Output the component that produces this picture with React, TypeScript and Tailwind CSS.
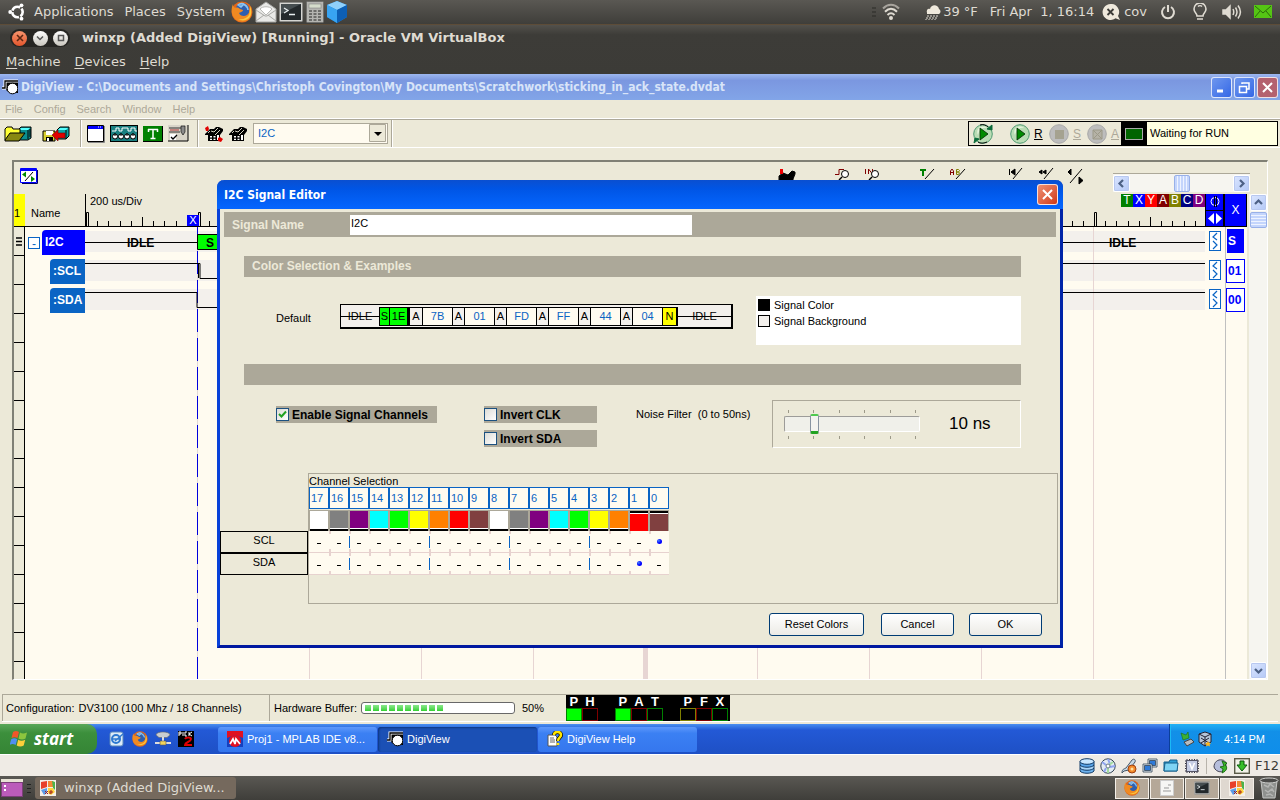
import type { ReactNode } from "react";

const CHANNELS = [
    { id: 17, color: "bg-white" },
    { id: 16, color: "bg-[#808080]" },
    { id: 15, color: "bg-[#800080]" },
    { id: 14, color: "bg-[#00ffff]" },
    { id: 13, color: "bg-[#00ff00]" },
    { id: 12, color: "bg-[#ffff00]" },
    { id: 11, color: "bg-[#ff8000]" },
    { id: 10, color: "bg-[#ff0000]" },
    { id: 9, color: "bg-[#804040]" },
    { id: 8, color: "bg-white" },
    { id: 7, color: "bg-[#808080]" },
    { id: 6, color: "bg-[#800080]" },
    { id: 5, color: "bg-[#00ffff]" },
    { id: 4, color: "bg-[#00ff00]" },
    { id: 3, color: "bg-[#ffff00]" },
    { id: 2, color: "bg-[#ff8000]" },
    { id: 1, color: "bg-[#ff0000]" },
    { id: 0, color: "bg-[#804040]" },
];

const FirefoxIcon = ({ className }: { className: string }) => (
    <svg viewBox="0 0 22 22" className={className}>
        <circle cx="11" cy="11" r="10.5" fill="#e0661a" />
        <circle cx="11.5" cy="9" r="7" fill="#2f5fae" />
        <path d="M12 3c3 1 5 3 5 6M7 4c2-2 5-2 6-1l-3 3z" stroke="#8fc4ee" strokeWidth="1.4" fill="#6aa5de" />
        <path d="M2 3c0 2 1 3 2 4 2-1 4 0 5 1l3 1c0 2-3 2-4 3 1 3 5 4 8 2 2-1 3-4 2-7 3 3 3 8 0 11-4 4-11 3-14 0C0 14 0 7 2 3z" fill="#f08a22" />
        <path d="M19 5c2 4 2 9-1 12-3 3-8 3-11 1 5 1 9-1 11-4 1-3 1-6 1-9z" fill="#fbc63c" />
    </svg>
);

const TerminalIcon = ({ className }: { className: string }) => (
    <svg viewBox="0 0 24 20" className={className}>
        <rect x="0.5" y="0.5" width="23" height="19" rx="1" fill="#d5d5d2" stroke="#8b8b88" />
        <rect x="2" y="2" width="20" height="16" fill="#23292c" />
        <path d="M2 2h20L2 12z" fill="#454d50" />
        <path d="M5 6l4 2.5L5 11M10 12.5h6" stroke="#e8eef0" fill="none" strokeWidth="1.3" />
    </svg>
);

const XpLogo = ({ className }: { className: string }) => (
    <svg viewBox="0 0 20 18" className={className}>
        <path d="M3 2c2-1.5 4-1.5 6 0L7.5 8c-2-1-4-1-6 0z" fill="#f0562a" />
        <path d="M10 2.5c2 1.2 4 1.2 7 0L15.5 8.5c-2 1.2-5 1.2-7 0z" fill="#8cc63e" />
        <path d="M1.2 9.2c2-1.2 4-1.2 6 0L5.6 15c-2-1.2-4-1.2-6 0z" fill="#4f8ff0" />
        <path d="M8.2 9.8c2 1.2 4.5 1.2 7 0L13.7 15.5c-2 1.2-5 1.2-7 0z" fill="#fbcf3b" />
    </svg>
);

const GuestIcon = ({ className }: { className: string }) => (
    <svg viewBox="0 0 16 16" className={className}>
        <rect width="16" height="16" fill="#f4efe8" />
        <path d="M1 2l6-1v6l-6 2z" fill="#e8402a" />
        <path d="M8 1l5 0c1 2 1 4 0 6H8z" fill="#f58a35" />
        <path d="M1 10l6-2v5l-3 2z" fill="#5b9be8" />
        <path d="M8 8h5l2 4-4 3-3-2z" fill="#ffd23c" />
        <path d="M12 1l3 1v8l-2-2z" fill="#4bb34a" />
        <path d="M5 11l3 3M8 11l-3 3M10 11v3M10 11h2v2h-2" stroke="#a02020" fill="none" />
    </svg>
);

const ScopeIcon = ({ className }: { className: string }) => (
    <svg viewBox="0 0 16 16" className={className}>
        <path d="M4 2h12v12H8l-4-3z" fill="#000" />
        <path d="M0 9h3V2h13" stroke="#fff" fill="none" strokeWidth="3" />
        <path d="M0 9h3V2h13" stroke="#000" fill="none" strokeWidth="1.3" />
        <circle cx="10.500" cy="9.500" r="5.300" fill="#fff" stroke="#000" />
    </svg>
);

const FolderIcon = () => (
    <svg viewBox="0 0 28 16" className="h-4 w-7">
        <path d="M14 4l3-3h10v11l-3 2H14z" fill="#0a8f8f" stroke="#000" />
        <path d="M17 2h9l-2 2h-9z" fill="#5ff" />
        <path d="M24 4v9M26 3v8" stroke="#000" />
        <path d="M1 14V3l2-2h5l1 2h7v4" fill="#ff3" stroke="#000" />
        <path d="M1 14l5-7h15l-6 8H1z" fill="#888811" stroke="#000" />
    </svg>
);

const SaveIcon = () => (
    <svg viewBox="0 0 28 16" className="h-4 w-7">
        <path d="M15 4l3-3h9v9l-3 3H15z" fill="#0aa5a5" stroke="#000" />
        <path d="M18 2h8l-2 2h-8z" fill="#5ff" />
        <path d="M24 4v9" stroke="#000" />
        <path d="M1 5h12v10H1z" fill="#d8cf30" stroke="#000" />
        <path d="M4 5h7v4H4z" fill="#fff" />
        <path d="M4 11h7v4H4z" fill="#000" />
        <path d="M5 12h2v3H5z" fill="#fff" />
        <path d="M10 9l6-5v3h7v5h-7v3z" fill="#e00000" stroke="#700" strokeWidth="0.6" />
    </svg>
);

const ChipIcon = () => (
    <svg viewBox="0 0 28 17" className="h-[17px] w-7">
        <rect width="28" height="17" fill="#000" />
        <rect x="1" y="1" width="26" height="15" fill="#1a7f80" />
        <path d="M2 6h4V3h3v3h3V3h6v3h3V3h4v3h2" stroke="#fff" fill="none" />
        {[5, 11, 17, 23].map((x) => (
            <g key={x}>
                <circle cx={x} cy="11.5" r="2.5" fill="#fff" stroke="#000" />
                <path d={`M${x} 8v3`} stroke="#000" />
            </g>
        ))}
    </svg>
);

const HouseIcon = ({ arrows }: { arrows?: boolean }) => (
    <svg viewBox="0 0 18 16" className="h-4 w-[18px]">
        <path d="M0 8l5-5h4l2-2h3l4 2v2l-3 4v6H3V9H0z" fill="#000" />
        <path d="M6 5l3 1 4-4M3 7l2-2M10 9l5-5" stroke="#ece9d8" fill="none" strokeWidth="0.9" />
        <path d="M5 10h2v1.500H5zM8.500 10h2v1.500h-2zM5 12.800h2V14H5zM8.500 12.800h2V14h-2zM12 9h2v5h-2z" fill="#fff" />
        {arrows && <path d="M0 2l3-2 1 3-1 2H1zM13 12l2-1 3 2-2 3-3-1z" fill="#e00000" />}
    </svg>
);

const PropsIcon = () => (
    <svg viewBox="0 0 21 17" className="h-[17px] w-[21px]">
        <path d="M0 0h20v16H0z" fill="#d8d4c8" />
        <path d="M20 0v16H0" stroke="#000" fill="none" />
        <path d="M1 3h12M1 7h11" stroke="#333" />
        <path d="M2 5h9" stroke="#b03030" />
        <path d="M13 1h4v6l-2 3-2-3z" fill="#8a8a8a" stroke="#000" strokeWidth="0.6" />
        <path d="M2 9h6v6H2z" fill="#fff" />
        <path d="M3 12l2 2 4-4" stroke="#000" fill="none" strokeWidth="1.3" />
    </svg>
);

const RunIcon = ({ kind }: { kind: "cycle" | "play" | "stop" | "abort" }) => {
    const on = kind === "cycle" || kind === "play";
    return (
        <svg viewBox="0 0 20 20" className="size-5">
            <circle cx="10" cy="10" r="9.3" fill={on ? "#b9dcb4" : "#bdbdbd"} stroke={on ? "#4f9a72" : "#a8a8a8"} />
            {on && <path d="M5 5c3-3 7-3 9-1-4-1-8 2-9 7-1-2-1-4 0-6z" fill="#e4f5dd" />}
            {on && <path d="M7 4l8 6-8 6z" fill="#008a00" stroke="#002800" strokeWidth="0.8" />}
            {kind === "cycle" && <path d="M14 5l5-4v5zM1 19l1-5 4 1z" fill="#0b6b3a" stroke="#0b6b3a" />}
            {kind === "cycle" && <path d="M7 1c3-1 6 0 8 2M5 18c3 2 6 1 9 0" stroke="#000" fill="none" />}
            {kind === "stop" && <path d="M6 6h9v9H6z" fill="#a5a290" />}
            {kind === "abort" && <path d="M6 6h9v9H6zM6 6l9 9M15 6l-9 9" fill="#b5b2a6" stroke="#9c9988" />}
        </svg>
    );
};

const GnomePanel = () => (
    <div className="flex h-[25px] items-center border-b border-[#5d4c38] bg-linear-to-b from-[#5a5853] to-[#3f3e3a] text-[13px] text-[#dfdbd2]">
        <svg viewBox="0 0 18 18" className="ml-2 size-[18px]">
            <circle cx="9.5" cy="9" r="5.2" fill="none" stroke="#fff" strokeWidth="2.6" strokeDasharray="9.4 1.5" strokeDashoffset="4.5" />
            <circle cx="2.2" cy="9" r="1.9" fill="#fff" />
            <circle cx="13.5" cy="2.3" r="1.9" fill="#fff" />
            <circle cx="13.5" cy="15.7" r="1.9" fill="#fff" />
        </svg>
        <div className="ml-2 flex gap-[11px]">
            <span>Applications</span>
            <span>Places</span>
            <span>System</span>
        </div>
        <div className="ml-[6px] flex items-center gap-[2px]">
            <FirefoxIcon className="size-[22px]" />
            <svg viewBox="0 0 22 22" className="size-[22px]">
                <path d="M1 8l10-7 10 7v13H1z" fill="#e9e9e7" stroke="#a5a5a2" />
                <path d="M5 8c2-3 10-3 12 0l-6 6z" fill="#fff" stroke="#b9b9b6" />
                <path d="M1 9l9 6h2l9-6M1 20l8-6M21 20l-8-6" fill="none" stroke="#a8a8a5" />
            </svg>
            <TerminalIcon className="h-5 w-6" />
            <svg viewBox="0 0 18 22" className="ml-px h-[22px] w-[18px]">
                <rect x="0.5" y="0.5" width="17" height="21" rx="1" fill="#b5b5b1" stroke="#6f6f6c" />
                <rect x="3" y="3" width="12" height="4" fill="#d5dccb" stroke="#777" strokeWidth="0.5" />
                {[9, 12, 15, 18].map((y) => (
                    <path key={y} d={`M3 ${y + 1}h3M7.5 ${y + 1}h3M12 ${y + 1}h3`} stroke="#6d6d6a" strokeWidth="2" />
                ))}
            </svg>
            <svg viewBox="0 0 22 22" className="size-[22px]">
                <path d="M11 0l10 4v12l-10 6L1 16V4z" fill="#1c83d8" />
                <path d="M11 0l10 4-10 5L1 4z" fill="#8fd0fb" />
                <path d="M1 4l10 5v13L1 16z" fill="#38a4f2" />
                <path d="M21 4L11 9v13l10-6z" fill="#0d5fb5" />
            </svg>
        </div>
        <div className="ml-auto flex items-center">
            <svg viewBox="0 0 30 18" className="mr-[23px] h-[18px] w-[30px]" fill="none" stroke="#dfdbd2" strokeWidth="2">
                <path d="M0 5h4M0 9h4M0 13h4" stroke="#2b2a27" strokeWidth="1" />
                <path d="M11 5.5c5-5 11-5 16 0" opacity="0.6" />
                <path d="M13 8.8c4-4 8-4 12 0M15.5 12c2.5-2.5 4.500-2.5 7 0" />
                <circle cx="19" cy="15" r="1" fill="#dfdbd2" />
            </svg>
            <svg viewBox="0 0 16 16" className="mr-[2px] size-4">
                <path d="M2 9c-1-3 1-5 3-4 1-5 8-5 9 0 2 1 2 4 0 5H2z" fill="#efe9dc" />
                <path d="M2 12h12M1 14h11M0 16h11" stroke="#dfdbd2" strokeDasharray="2 1" />
            </svg>
            <span>39 °F</span>
            <span className="ml-3 whitespace-pre">Fri Apr  1, 16:14</span>
            <svg viewBox="0 0 18 16" className="ml-2 h-4 w-[18px]">
                <path d="M8.5 0a8 8 0 1 0 5 14.3L18 16l-2-4A8 8 0 0 0 8.5 0z" fill="#efe9dc" />
                <path d="M5.5 5l6 6M11.5 5l-6 6" stroke="#3c3b37" strokeWidth="1.8" />
            </svg>
            <span className="ml-1">cov</span>
            <svg viewBox="0 0 16 16" className="ml-[13px] size-4" fill="none" stroke="#dfdbd2" strokeWidth="2">
                <path d="M5 3a6 6 0 1 0 6 0M8 1v7" />
            </svg>
            <svg viewBox="0 0 16 18" className="ml-4 h-[18px] w-4" fill="none" stroke="#dfdbd2" strokeWidth="1.6">
                <path d="M5 13c0-3-3-3-3-7a6 6 0 0 1 12 0c0 4-3 4-3 7zM5 16h6M6 3.5c1-1 3-1 4 0" />
            </svg>
            <svg viewBox="0 0 20 16" className="ml-[14px] h-4 w-5" fill="none" stroke="#dfdbd2" strokeWidth="1.5">
                <path d="M1 6h3l4-4v12l-4-4H1z" fill="#dfdbd2" />
                <path d="M11 5c1 2 1 4 0 6M13.5 3.5c2 3 2 6 0 9M16 1.5c3 4 3 9 0 13" />
            </svg>
            <svg viewBox="0 0 18 14" className="mr-2 ml-3 h-[14px] w-[18px]">
                <rect width="18" height="13" fill="#55c514" />
                <path d="M1 1l8 7 8-7M1 12l5-6M17 12l-5-6" fill="none" stroke="#2b6b0a" />
            </svg>
        </div>
    </div>
);

const HostTitle = () => (
    <div className="bg-linear-to-b from-[#53514c] via-[#3d3c38] via-20% to-[#3c3b37] text-[13px] text-[#dfdbd2]">
        <div className="flex h-[26px] items-center">
            <div className="ml-[10px] flex h-[18px] w-[60px] items-center justify-between rounded-full bg-[#262522] px-[2px]">
                <button aria-label="Close" className="grid size-[15px] place-items-center rounded-full bg-linear-to-b from-[#f7936c] to-[#e2552b]">
                    <svg viewBox="0 0 8 8" className="size-2" stroke="#5b2612" strokeWidth="1.6"><path d="M1 1l6 6M7 1L1 7" /></svg>
                </button>
                <button aria-label="Minimize" className="grid size-[15px] place-items-center rounded-full bg-linear-to-b from-white to-[#c9c6be]">
                    <svg viewBox="0 0 8 8" className="size-2" stroke="#555" strokeWidth="1.5" fill="none"><path d="M1 2.5l3 3 3-3" /></svg>
                </button>
                <button aria-label="Maximize" className="grid size-[15px] place-items-center rounded-full bg-linear-to-b from-white to-[#c9c6be]">
                    <svg viewBox="0 0 8 8" className="size-2" stroke="#555" strokeWidth="1.5" fill="none"><path d="M1.5 1.5h5v5h-5z" /></svg>
                </button>
            </div>
            <h1 className="ml-3 font-bold">winxp (Added DigiView) [Running] - Oracle VM VirtualBox</h1>
        </div>
        <div className="flex h-[23px] items-center gap-[14px] px-[6px] pb-[2px]">
            <span><u className="underline-offset-2">M</u>achine</span>
            <span><u className="underline-offset-2">D</u>evices</span>
            <span><u className="underline-offset-2">H</u>elp</span>
        </div>
    </div>
);

const XpButton = ({ label, red, dim, children }: { label: string; red?: boolean; dim?: boolean; children: ReactNode }) => (
    <button
        aria-label={label}
        className={
            "grid size-[21px] place-items-center rounded-[3px] border border-white/80 " +
            (red ? (dim ? "bg-[#b4616f]" : "bg-linear-to-br from-[#ee8f72] to-[#cf3512]") : "bg-linear-to-br from-[#6f97ee] to-[#3567e6]")
        }
    >
        <svg viewBox="0 0 13 13" className="size-[13px]" fill="none" stroke="#fff" strokeWidth="2">
            {children}
        </svg>
    </button>
);

const AppTitle = () => (
    <div className="flex h-[26px] items-center gap-[2px] bg-linear-to-b from-[#9db7f0] via-[#7b97e0] via-25% to-[#82a5e8] pr-[2px] pl-[2px] text-[#d8e4f8]">
        <ScopeIcon className="size-4" />
        <h2 className="ml-px flex-1 truncate text-[12px] font-bold [font-family:'DejaVu_Sans_Condensed','DejaVu_Sans',sans-serif]">
            DigiView - C:\Documents and Settings\Christoph Covington\My Documents\Scratchwork\sticking_in_ack_state.dvdat
        </h2>
        <XpButton label="Minimize"><path d="M2 10h6" strokeWidth="3" /></XpButton>
        <XpButton label="Restore"><path d="M1.5 5.5h7v6h-7zM4 3V2h7v6H9" strokeWidth="1.5" /></XpButton>
        <XpButton label="Close" red dim><path d="M2 2l9 9M11 2l-9 9" /></XpButton>
    </div>
);

const ToolGroup = ({ className, children }: { className: string; children: ReactNode }) => (
    <div className={"flex items-center border-r border-[#aca899] shadow-[1px_0_0_#fff] " + className}>{children}</div>
);

const AppToolbar = () => (
    <div className="flex h-[29px] items-stretch border-t border-b border-t-[#aca899] border-b-white shadow-[0_-1px_0_#fff]">
        <ToolGroup className="w-[81px] gap-[10px] pl-[4px]">
            <FolderIcon />
            <SaveIcon />
        </ToolGroup>
        <ToolGroup className="w-[117px] gap-[5px] pl-[6px]">
            <svg viewBox="0 0 18 18" className="size-[18px]">
                <path d="M.5.5h16v16H.5z" fill="#fff" stroke="#000" />
                <path d="M1 1h15v3H1z" fill="#00f" />
                <path d="M11 2h1M13 2h1" stroke="#fff" />
                <path d="M17.5 1v16.5H1" stroke="#888" fill="none" />
            </svg>
            <ChipIcon />
            <svg viewBox="0 0 20 16" className="h-4 w-5">
                <path d="M0 0h20v16H0z" fill="#000" />
                <path d="M0 0h19v15H0z" fill="#008000" />
                <path d="M5 3.5h10M10 3v9M7.5 12.500h5M5.5 3v3M14.500 3v3" stroke="#fff" strokeWidth="1.5" />
            </svg>
            <PropsIcon />
        </ToolGroup>
        <ToolGroup className="w-[194px] gap-[6px] pl-[7px]">
            <HouseIcon arrows />
            <HouseIcon />
            <div className="relative">
                <select aria-label="Signal" className="block h-[21px] w-[135px] appearance-none border border-[#aca899] bg-[#fffbf0] pl-1 text-[11px] leading-[15px] text-[#0a64c4]">
                    <option>I2C</option>
                </select>
                <svg viewBox="0 0 18 19" className="pointer-events-none absolute top-px right-px h-[19px] w-[18px]">
                    <path d="M.5.5h16v17H.5z" fill="#ece9d8" stroke="#aca899" />
                    <path d="M5 8h8l-4 4z" fill="#000" />
                </svg>
            </div>
        </ToolGroup>
        <div className="my-px mr-[2px] ml-auto flex w-[310px] items-center border border-black pl-1">
            <RunIcon kind="cycle" />
            <span className="w-[17px]" />
            <RunIcon kind="play" />
            <u className="w-[19px] pl-1 text-xs">R</u>
            <RunIcon kind="stop" />
            <u className="w-[18px] pl-1 text-xs text-[#aca899]">S</u>
            <RunIcon kind="abort" />
            <u className="w-[14px] pl-1 text-xs text-[#aca899]">A</u>
            <div className="flex h-full flex-1 bg-[#ffffe1]">
                <div className="grid w-[26px] place-items-center bg-black">
                    <div className="h-3 w-[18px] border border-[#aaa] bg-[#006400]" />
                </div>
                <span className="self-center pl-[3px] text-[11px]">Waiting for RUN</span>
            </div>
        </div>
    </div>
);

const ScrollButton = ({ d }: { d: string }) => (
    <button aria-label="Scroll" className="grid size-[17px] shrink-0 place-items-center rounded-[2px] border border-white bg-linear-to-br from-[#dbe6ff] to-[#b4c8f6] shadow-[0_0_0_1px_#b8c8f0_inset]">
        <svg viewBox="0 0 9 9" className="size-[9px]" fill="none" stroke="#4d6185" strokeWidth="2.2"><path d={d} /></svg>
    </button>
);

const GraphTools = () => (
    <div className="flex h-8 items-start pt-[6px] pl-[6px]">
        <svg viewBox="0 0 18 16" className="h-4 w-[18px]">
            <path d="M.5.5h16v14H.5z" fill="#fff" stroke="#00f" />
            <path d="M1 1h15v2H1z" fill="#00f" />
            <path d="M17.5 2v13.5H2" stroke="#006" fill="none" />
            <path d="M5 13l8-9" stroke="#000" />
            <path d="M2 6.500l4-3v6zM15 11l-4-3v6z" fill="#080" />
        </svg>
        <div className="ml-auto flex items-start">
            <svg viewBox="0 0 200 18" className="h-[18px] w-[200px]" fill="none" stroke="#000">
                <path d="M1 8l4-3 5 2 4-4 3 1v2l-2 5v7H1z" fill="#000" />
                <path d="M2 1h3v5H2z" fill="#e00" stroke="none" />
                <path d="M57 6.5h4v-5h5" stroke="#800000" />
                <circle cx="67" cy="6" r="3.5" fill="#fff" />
                <path d="M64 9l-3 3" strokeWidth="1.5" />
                <path d="M87.500 1v5M90.500 6V1l4 5V1" stroke="#800000" />
                <circle cx="97" cy="6" r="3.5" fill="#fff" />
                <path d="M94 9l-3 3" strokeWidth="1.5" />
                <path d="M142 2h6M145 2v6" stroke="#008000" strokeWidth="2" />
                <path d="M147 11l9-10M178 11l9-10" />
                <path d="M172.500 7V3l1.500-2 1.500 2v4M172 4.500h4" stroke="#800000" />
                <path d="M178.500 1.500h2l1 1-1 1.500h-2 2l1 1-1 1.500h-2z" stroke="#808000" />
            </svg>
            <svg viewBox="0 0 84 18" className="mr-[25px] ml-[26px] h-[18px] w-[84px]" fill="#000" stroke="#000">
                <path d="M5.500 1v6M7 4l4-3v6zM9 11l9-11M35 4l3-2v4zM39 4l3-2v4zM40 11l9-11M64 4l3-3v6zM66 15l12-14M75 9v7l4-3.5z" />
            </svg>
            <div className="mt-[5px] mr-[17px] flex h-[19px] w-[137px] items-center border-t border-[#aca899] bg-[#f6f5f0]">
                <ScrollButton d="M6 1L2.5 4.5 6 8" />
                <div className="flex flex-1 justify-center">
                    <div className="h-[17px] w-4 rounded-[2px] border border-[#98b0e8] bg-[repeating-linear-gradient(90deg,#c4d5fc_0_2px,#eef3ff_2px_3px)]" />
                </div>
                <ScrollButton d="M3 1l3.5 3.5L3 8" />
            </div>
        </div>
    </div>
);

const MARKERS = [
    { name: "T", color: "bg-[#008000]" },
    { name: "X", color: "bg-[#0000ff]" },
    { name: "Y", color: "bg-[#ff0000]" },
    { name: "A", color: "bg-[#800000]" },
    { name: "B", color: "bg-[#808000]" },
    { name: "C", color: "bg-[#000080]" },
    { name: "D", color: "bg-[#800080]" },
];

const Ruler = () => (
    <div className="relative flex-1 border-l border-black">
        <svg className="absolute inset-0 size-full" stroke="#000">
            {Array.from({ length: 100 }, (_, i) => {
                const x = Math.round(i * 11.2) + 0.5;
                if (i % 10 === 0) return <path key={i} d={`M${x} 32V18.5h2V32`} fill="#ece9d8" />;
                return <path key={i} d={`M${x} 32V${i % 5 === 0 ? 23 : 27}`} />;
            })}
        </svg>
        <span className="absolute top-0 left-1 leading-[14px]">200 us/Div</span>
        <span className="absolute bottom-0 left-[101px] h-[11px] w-3 bg-[#0000ff] text-center leading-[11px] text-white">X</span>
        <div className="absolute top-0 right-0 flex h-[13px] text-white">
            {MARKERS.map((m) => (
                <span key={m.name} className={"w-3 text-center text-xs leading-[13px] " + m.color}>{m.name}</span>
            ))}
        </div>
    </div>
);

const GRID = [224, 336, 448, 672, 784, 896, 1008];

const Waves = () => (
    <svg className="absolute inset-0 size-full" fill="none">
        <path d="M0 4h1120v21H0zM0 33h1120v21H0zM0 62h1120v21H0z" fill="#f3f0ec" />
        {GRID.map((x) => (
            <path key={x} d={`M${x + 0.5} 0v460`} stroke="#e7d5d3" />
        ))}
        <path d="M560.5 0v460" stroke="#e7d5d3" strokeWidth="5" />
        <path d="M112.5 0v460" stroke="#e0d8d8" />
        <path d="M112.5-5v460" stroke="#0000dd" strokeDasharray="23 6" />
        <path d="M0 15.5h1120M0 36.5h115v15h835v-15h170M0 65.5h112v15h838v-15h170M113.5 36v15" stroke="#000" />
        <path d="M112.5 7.5h30v15h-30z" fill="#00ff00" stroke="#000" />
        <g fill="#000" fontSize="12" fontWeight="bold">
            <text x="42" y="20">IDLE</text>
            <text x="121" y="20">S</text>
            <text x="1024" y="20">IDLE</text>
        </g>
    </svg>
);

const Graph = () => (
    <div className="mx-3 mt-3 flex flex-1 flex-col border-t-2 border-r border-b border-l-2 border-[#808075] border-r-white border-b-white text-[11px]">
        <GraphTools />
        <div className="flex flex-1">
            <div className="flex flex-1 flex-col pr-[2px]">
                <div className="flex h-[33px] border-b border-black">
                    <span className="w-[11px] bg-[#ffff00] pt-[11px]">1</span>
                    <span className="w-[60px] pt-[11px] pl-[6px]">Name</span>
                    <Ruler />
                    <div className="grid w-[20px] gap-px border-l border-black bg-black pr-[2px]">
                        <button aria-label="Center" className="grid place-items-center bg-[#0000ff]">
                            <svg viewBox="0 0 14 13" className="h-[13px] w-[14px]" fill="none" stroke="#fff"><circle cx="7" cy="6.5" r="4" /><path d="M6.500 1v11M8.500 1v11" stroke="#000" /></svg>
                        </button>
                        <button aria-label="Spread" className="grid place-items-center bg-[#0000ff]">
                            <svg viewBox="0 0 14 13" className="h-[13px] w-[14px]" fill="#fff"><path d="M6 1v11L0 6.5zM8 1v11l6-5.5z" /></svg>
                        </button>
                    </div>
                    <div className="grid w-[22px] place-items-center border-r border-black bg-[#0000ff] text-xs text-white">X</div>
                </div>
                <div className="flex flex-1 bg-[#fffbf0]">
                    <div className="w-[11px] border-r border-black bg-[repeating-linear-gradient(#ece9d8_0_28px,#000_28px_29px)]">
                        <svg viewBox="0 0 10 20" className="h-5 w-[10px]" stroke="#000" strokeWidth="1.5"><path d="M2 11h6M2 14.5h6M2 18h6" /></svg>
                    </div>
                    <div className="flex w-[60px] flex-col items-end gap-1 pt-[3px] text-xs font-bold text-white">
                        <div className="flex items-center gap-[2px]">
                            <button aria-label="Collapse" className="grid size-[12px] place-items-center border border-[#0a64c4] bg-white font-normal leading-none text-[#0a64c4]">-</button>
                            <span className="w-[43px] rounded-tl-[4px] bg-[#0000ff] pl-[3px] leading-[25px]">I2C</span>
                        </div>
                        <span className="w-[35px] rounded-tl-[4px] bg-[#0a64c4] pl-[3px] leading-[25px]">:SCL</span>
                        <span className="w-[35px] rounded-tl-[4px] bg-[#0a64c4] pl-[3px] leading-[25px]">:SDA</span>
                    </div>
                    <div className="relative flex-1">
                        <Waves />
                    </div>
                    <div className="flex w-[21px] flex-col items-center gap-[9px] border-r border-[#c0c0c0] pt-1">
                        {["I2C", "SCL", "SDA"].map((n) => (
                            <button key={n} aria-label={"Search " + n} className="h-5 w-3 border border-[#0a64c4] bg-white">
                                <svg viewBox="0 0 10 18" className="h-[18px] w-[10px]" fill="none" stroke="#0a64c4" strokeWidth="1.2"><path d="M7 1L3 5l4 3M3 9l4 4-4 4" /></svg>
                            </button>
                        ))}
                    </div>
                    <div className="flex w-[21px] flex-col gap-[5px] pt-[2px] text-xs font-bold text-[#0000ff]">
                        <span className="mr-[3px] mb-px ml-px bg-[#0000ff] pl-px leading-[24px] text-white">S</span>
                        <span className="mr-[2px] border border-[#0000ff] bg-white pl-px leading-[22px]">01</span>
                        <span className="mr-[2px] border border-[#0000ff] bg-white pl-px leading-[22px]">00</span>
                    </div>
                </div>
            </div>
            <div className="flex w-[18px] flex-col items-center justify-between bg-[#f6f5f0]">
                <div>
                    <ScrollButton d="M1 6l3.5-3.5L8 6" />
                    <div className="mt-px h-4 w-[17px] rounded-[2px] border border-[#98b0e8] bg-[repeating-linear-gradient(#c4d5fc_0_2px,#eef3ff_2px_3px)]" />
                </div>
                <ScrollButton d="M1 3l3.5 3.5L8 3" />
            </div>
        </div>
    </div>
);

const PREVIEW = ["7B", "01", "FD", "FF", "44", "04"];

const Preview = () => (
    <div className="flex h-[25px] w-[393px] items-center border border-r-2 border-b-2 border-black bg-[#f3f0ec] text-[11px]">
        <div className="relative flex-1 text-center before:absolute before:inset-x-0 before:top-1/2 before:border-t before:border-black">IDLE</div>
        <div className="flex h-[19px] border-y border-black leading-[17px]">
            <span className="w-[10px] border-l border-black bg-[#00ff00] text-center">S</span>
            <span className="w-[21px] border-r-3 border-l border-black bg-[#00ff00] text-center">1E</span>
            {PREVIEW.map((v, i) => (
                <span key={v} className="flex">
                    <span className={(i > 0 ? "border-l " : "") + "w-3 border-black text-center"}>A</span>
                    <span className="w-[30px] border-l border-black bg-[#fffbf0] text-center text-[#0a64c4]">{v}</span>
                </span>
            ))}
            <span className="w-[16px] border-r-2 border-l border-black bg-[#ffff00] text-center">N</span>
        </div>
        <div className="relative w-[53px] text-center before:absolute before:inset-x-0 before:top-1/2 before:border-t before:border-black">IDLE</div>
    </div>
);

const Check = ({ label, checked, className }: { label: string; checked?: boolean; className: string }) => (
    <label className={"flex h-[17px] items-center gap-[3px] bg-[#aca899] text-xs font-bold " + className}>
        <span className="relative grid size-[13px] place-items-center">
            <input type="checkbox" defaultChecked={checked} className="size-[13px] appearance-none border border-[#1c5180] bg-linear-to-br from-[#dcdcd7] to-white" />
            {checked && (
                <svg viewBox="0 0 9 9" className="pointer-events-none absolute size-[9px]" fill="none" stroke="#21a121" strokeWidth="2"><path d="M1 4l2.5 2.5L8 1.5" /></svg>
            )}
        </span>
        {label}
    </label>
);

const Ticks = () => (
    <div className="flex w-32 justify-between">
        {[0, 10, 20, 30, 40, 50].map((t) => (
            <span key={t} className="h-[3px] w-px bg-[#9c9988]" />
        ))}
    </div>
);

const NoiseFilter = () => (
    <div className="flex h-12 w-[249px] items-center border border-[#aca899] border-r-white border-b-white pl-[11px]">
        <div className="flex w-[136px] flex-col items-center gap-px">
            <Ticks />
            <input
                id="noise"
                type="range"
                min={0}
                max={50}
                defaultValue={10}
                className="h-[21px] w-full appearance-none bg-transparent [&::-webkit-slider-runnable-track]:h-4 [&::-webkit-slider-runnable-track]:rounded-[2px] [&::-webkit-slider-runnable-track]:border [&::-webkit-slider-runnable-track]:border-[#9d9c99] [&::-webkit-slider-runnable-track]:border-r-white [&::-webkit-slider-runnable-track]:border-b-white [&::-webkit-slider-runnable-track]:bg-[#f0f0ea] [&::-webkit-slider-thumb]:mt-[-3px] [&::-webkit-slider-thumb]:h-5 [&::-webkit-slider-thumb]:w-[9px] [&::-webkit-slider-thumb]:appearance-none [&::-webkit-slider-thumb]:rounded-[2px] [&::-webkit-slider-thumb]:border [&::-webkit-slider-thumb]:border-t-2 [&::-webkit-slider-thumb]:border-b-3 [&::-webkit-slider-thumb]:border-[#8793a0] [&::-webkit-slider-thumb]:border-t-[#4fc94f] [&::-webkit-slider-thumb]:border-b-[#22a322] [&::-webkit-slider-thumb]:bg-[#f3f3ef]"
            />
            <Ticks />
        </div>
        <span className="pl-[29px] text-[17px]">10 ns</span>
    </div>
);

const ChannelRow = ({ name, selected }: { name: string; selected: number }) => (
    <tr aria-label={name}>
        {CHANNELS.map((c, i) => (
            <td key={c.id} className="p-0">
                <div className="relative h-[22px] border-b border-[#e7d2cf] bg-[#fffbf0] text-center leading-[18px]">
                    {i > 0 && <span className="absolute top-0 left-0 h-[3px] w-[2px] bg-[#e7d2cf]" />}
                    {i > 0 && <span className="absolute bottom-0 left-0 h-[3px] w-[2px] bg-[#e7d2cf]" />}
                    {c.id % 4 === 3 && <span className="absolute top-[5px] left-0 h-3 w-px bg-[#0a64c4]" />}
                    {c.id === selected ? (
                        <span className="inline-block size-[5px] rounded-full bg-[radial-gradient(circle_at_35%_35%,#48f,#00f_50%)] align-middle" />
                    ) : (
                        <span className="mt-[5px] inline-block h-px w-1 bg-black align-middle" />
                    )}
                </div>
            </td>
        ))}
    </tr>
);

const ChannelPanel = () => (
    <div className="mt-[25px] flex">
        <div className="w-[88px] pt-[58px] text-center leading-[16px]">
            <div className="h-[22px] border border-black">SCL</div>
            <div className="h-[22px] border border-black">SDA</div>
        </div>
        <div className="mr-[2px] h-[131px] flex-1 border border-[#aca899]">
            <table className="table-fixed border-collapse">
                <caption className="h-[13px] text-left leading-[14px]">Channel Selection</caption>
                <thead>
                    <tr>
                        {CHANNELS.map((c) => (
                            <th key={c.id} className="w-5 p-0 font-normal">
                                <div className="h-[22px] w-5 border border-[#0a64c4] bg-[#fffbf0] pl-px text-left leading-[20px] text-[#0a64c4]">{c.id}</div>
                            </th>
                        ))}
                    </tr>
                </thead>
                <tbody>
                    <tr>
                        {CHANNELS.map((c) => (
                            <td key={c.id} className="p-0 pt-px">
                                <div className={"flex h-[21px] w-5 gap-px border-x border-t border-[#aca899] bg-white " + (c.id < 2 ? "flex-col-reverse" : "flex-col")}>
                                    <span className={"h-[17px] " + c.color} />
                                    <span className="h-[2px] bg-black" />
                                </div>
                            </td>
                        ))}
                    </tr>
                    <ChannelRow name="SCL" selected={0} />
                    <ChannelRow name="SDA" selected={1} />
                </tbody>
            </table>
        </div>
    </div>
);

const DialogButton = ({ className, children }: { className: string; children: ReactNode }) => (
    <button className={"h-[23px] rounded-[3px] border border-[#003c74] bg-linear-to-b from-white to-[#ecebe6] " + className}>{children}</button>
);

const SignalEditor = () => (
    <div className="absolute top-8 left-1/2 w-[846px] -translate-x-1/2 rounded-t-[7px] border-3 border-t-0 border-[#0841d9] border-r-[#0024a8] border-b-[#0018a0] bg-[#ece9d8] pb-[9px] text-[11px]">
        <div className="mx-[-3px] flex h-[29px] items-center justify-between rounded-t-[7px] bg-linear-to-b from-[#0a4fd0] via-[#0055e5] via-30% to-[#0566ff] pr-[5px] pl-[7px]">
            <h2 className="text-[12px] font-bold text-white [font-family:'DejaVu_Sans_Condensed','DejaVu_Sans',sans-serif]">I2C Signal Editor</h2>
            <XpButton label="Close" red><path d="M2 2l9 9M11 2l-9 9" /></XpButton>
        </div>
        <div className="mx-1 mt-[3px] flex h-[25px] items-center bg-[#aca899] pl-2">
            <label htmlFor="signal" className="w-[118px] text-xs font-bold text-[#ece9d8]">Signal Name</label>
            <input id="signal" defaultValue="I2C" className="h-5 w-[342px] bg-white px-px pb-1" />
        </div>
        <div className="mr-[39px] ml-6">
            <h3 className="mt-[19px] bg-[#aca899] pl-2 text-xs leading-[21px] font-bold text-[#ece9d8]">Color Selection & Examples</h3>
            <div className="mt-[19px] flex">
                <span className="mt-[14px] ml-8 w-16">Default</span>
                <div className="mt-2"><Preview /></div>
                <ul className="ml-[23px] h-[49px] flex-1 bg-white pt-px pl-[2px] leading-4">
                    <li className="flex items-center gap-1"><span className="size-3 bg-black" />Signal Color</li>
                    <li className="flex items-center gap-1"><span className="size-3 border border-black bg-[#f3f0ec]" />Signal Background</li>
                </ul>
            </div>
            <div className="mt-[19px] h-[21px] bg-[#aca899]" />
            <div className="mt-[15px] flex">
                <div className="mt-[6px] ml-8 w-[208px]"><Check label="Enable Signal Channels" checked className="w-[161px]" /></div>
                <div className="mt-[6px] flex w-[152px] flex-col gap-[7px]">
                    <Check label="Invert CLK" className="w-[113px]" />
                    <Check label="Invert SDA" className="w-[113px]" />
                </div>
                <label htmlFor="noise" className="mt-[6px] whitespace-pre">Noise Filter  (0 to 50ns)</label>
                <div className="ml-auto"><NoiseFilter /></div>
            </div>
        </div>
        <ChannelPanel />
        <div className="mt-[9px] mr-[18px] flex justify-end">
            <DialogButton className="w-[95px]">Reset Colors</DialogButton>
            <DialogButton className="ml-[17px] w-[73px]">Cancel</DialogButton>
            <DialogButton className="ml-[15px] w-[73px]">OK</DialogButton>
        </div>
    </div>
);

const LEDS = [
    [{ n: "P", c: "border-[#008000] bg-[#00ff00]" }, { n: "H", c: "border-[#800000]" }],
    [{ n: "P", c: "border-[#008000] bg-[#00ff00]" }, { n: "A", c: "border-[#800000]" }, { n: "T", c: "border-[#008000]" }],
    [{ n: "P", c: "border-[#808000]" }, { n: "F", c: "border-[#800000]" }, { n: "X", c: "border-[#008000]" }],
];

const StatusBar = () => (
    <div className="mx-[2px] mt-[14px] mb-[2px] flex h-7 items-center border-t border-b border-t-[#aca899] border-b-white text-[11px]">
        <div className="flex h-full w-[268px] items-center gap-1 border-r border-l border-[#aca899] pl-[3px]">
            <span>Configuration:</span>
            <span>DV3100 (100 Mhz / 18 Channels)</span>
        </div>
        <span className="ml-1">Hardware Buffer:</span>
        <div className="ml-1 flex h-3 w-[154px] items-center gap-[2px] rounded-[3px] border border-[#686868] bg-white pl-[3px]">
            {Array.from({ length: 10 }, (_, i) => (
                <span key={i} className="h-[6px] w-[6px] bg-linear-to-b from-[#8be88b] to-[#2fd02f]" />
            ))}
        </div>
        <span className="ml-[7px] w-11">50%</span>
        <div className="flex h-[26px] w-[164px] gap-[17px] bg-black text-[13px] leading-[13px] font-bold text-white">
            {LEDS.map((group, i) => (
                <div key={i} className="flex">
                    {group.map((led) => (
                        <div key={led.n} className="w-4 text-center">
                            {led.n}
                            <div className={"h-[13px] border " + led.c} />
                        </div>
                    ))}
                </div>
            ))}
        </div>
    </div>
);

const TaskButton = ({ active, icon, children }: { active?: boolean; icon: ReactNode; children: ReactNode }) => (
    <button
        className={
            "flex h-[25px] w-[159px] items-center gap-1 rounded-[3px] pl-[9px] " +
            (active ? "bg-[#1b50b5] shadow-[inset_1px_1px_2px_#0d357f]" : "bg-linear-to-b from-[#5d98fb] via-[#3b80f3] via-25% to-[#3577ee]")
        }
    >
        {icon}
        {children}
    </button>
);

const Taskbar = () => (
    <div className="flex h-[30px] items-center bg-linear-to-b from-[#4a8ff0] via-[#2359d6] via-20% to-[#1e50c5] text-[11px] text-white">
        <button className="flex h-full w-[97px] items-center gap-1 rounded-r-[10px] bg-linear-to-b from-[#5aa85a] via-[#3c8f3c] via-30% to-[#358535] pl-[10px] text-[17px] font-bold italic [font-family:'Open_Sans',sans-serif]">
            <XpLogo className="h-[18px] w-5" />
            start
        </button>
        <div className="flex w-[121px] items-center gap-[7px] pl-3">
            <svg viewBox="0 0 16 16" className="size-4">
                <rect x="1" y="1" width="13" height="14" rx="2" fill="#dcebf8" stroke="#5a88bb" />
                <circle cx="7" cy="8" r="4" fill="none" stroke="#2d78d0" strokeWidth="2" />
                <path d="M6 10l8-7M4 8h7" stroke="#2d78d0" strokeWidth="1.5" />
            </svg>
            <FirefoxIcon className="size-4" />
            <svg viewBox="0 0 16 16" className="size-4">
                <path d="M1 4c0-4 14-4 14 0l-3 2.500H4z" fill="#c9cdd0" stroke="#666" strokeWidth="0.6" />
                <path d="M8 6v6M0 12h16" stroke="#ddd" strokeWidth="2" />
                <path d="M5 10h6v4H5z" fill="#f2d45a" stroke="#555" strokeWidth="0.6" />
            </svg>
            <svg viewBox="0 0 16 16" className="size-4">
                <path d="M0 0h16v16H0z" fill="#000" />
                <path d="M1 5V1h2v2H1M5 1v4M9 1H7v4h2M11 1v4M14 1l-3 2 3 2" stroke="#fff" fill="none" />
                <path d="M7 8c1-2 6-2 6 0 0 3-6 3-6 6h7" stroke="#e00000" strokeWidth="2" fill="none" />
            </svg>
        </div>
        <div className="flex gap-px">
            <TaskButton
                icon={
                    <svg viewBox="0 0 16 16" className="size-4">
                        <path d="M0 0h16v16H0z" fill="#1540c0" />
                        <path d="M0 0h16v7L8 4 0 7z" fill="#e01020" />
                        <circle cx="8" cy="10" r="6" fill="#e01020" />
                        <path d="M3 13l3-5 2 5M8 13l1-5 4 5" stroke="#fff" strokeWidth="1.800" fill="none" />
                    </svg>
                }
            >
                Proj1 - MPLAB IDE v8...
            </TaskButton>
            <TaskButton active icon={<ScopeIcon className="size-4" />}>DigiView</TaskButton>
            <TaskButton
                icon={
                    <svg viewBox="0 0 16 16" className="size-4">
                        <path d="M1 4h7l2 2v9H1z" fill="#fff" stroke="#555" />
                        <path d="M3 7h4M3 9h5M3 11h5" stroke="#666" />
                        <path d="M7 4c0-4 7-4 7 0 0 3-3 2-3 6" stroke="#000" strokeWidth="4" fill="none" />
                        <path d="M7 4c0-4 7-4 7 0 0 3-3 2-3 6M11 12v2" stroke="#ffe600" strokeWidth="2.5" fill="none" />
                    </svg>
                }
            >
                DigiView Help
            </TaskButton>
        </div>
        <div className="ml-auto flex h-full w-[111px] items-center border-l border-[#0a3f9a] bg-linear-to-b from-[#22b1f5] via-[#1290e8] via-25% to-[#0f8eea] pl-[10px] shadow-[inset_1px_0_0_#1bb9f5]">
            <svg viewBox="0 0 14 16" className="mr-1 h-4 w-[14px]">
                <path d="M1 2l5 2 2-3 1 6-6 2z" fill="#3cb034" stroke="#1c6a18" strokeWidth="0.6" />
                <path d="M4 11l7-3 3 3-7 4z" fill="#b8bcc0" stroke="#444" />
            </svg>
            <svg viewBox="0 0 14 16" className="h-4 w-[14px]">
                <path d="M7 1l6 2v8l-6 4-6-4V3z" fill="#b5c5d8" stroke="#223" />
                <path d="M1 3l6 3 6-3M7 6v9M3 7l8 5M11 7l-8 5" stroke="#223" fill="none" />
                <path d="M10 10l1 2 2 0-1.5 1.5.5 2-2-1-2 1 .5-2L7 12h2z" fill="#ffb81c" />
            </svg>
            <span className="ml-3">4:14 PM</span>
        </div>
    </div>
);

const HostStatus = () => (
    <div className="flex h-[22px] items-center justify-end gap-[5px] border-t border-white bg-[#efebe5] pr-px text-[13px] text-[#3c3b37]">
        <svg viewBox="0 0 16 16" className="size-4" stroke="#123a66">
            <path d="M1 10v3c2 3 12 3 14 0v-3z" fill="#6db2ee" />
            <path d="M1 7v3c2 3 12 3 14 0V7z" fill="#a8d5fa" />
            <path d="M1 3.5V7c2 3 12 3 14 0V3.5z" fill="#5aa5ea" />
            <ellipse cx="8" cy="3.5" rx="7" ry="2.8" fill="#c8e6ff" />
        </svg>
        <svg viewBox="0 0 16 16" className="size-4">
            <circle cx="8" cy="8" r="7.2" fill="#e4ecf4" stroke="#345" />
            <path d="M8 1l2 5M15 8l-5 1M4 14l2-4M2 4l4 3" stroke="#8fa4f0" strokeWidth="2" />
            <path d="M13 4l-4 3M8 15v-5" stroke="#a4dca0" strokeWidth="2" />
            <circle cx="8" cy="8" r="2" fill="#fff" stroke="#678" />
        </svg>
        <svg viewBox="0 0 16 16" className="size-4">
            <path d="M1 15c0-4 2-4 4-5l6-8c2-2 4 0 3 2l-6 8-5 1z" fill="#c5d8e6" stroke="#456" />
            <circle cx="11" cy="11" r="4" fill="#f28a2a" stroke="#a04010" />
            <circle cx="11" cy="11" r="1.5" fill="#ffe0a0" />
        </svg>
        <svg viewBox="0 0 16 16" className="size-4" stroke="#345" strokeWidth="0.8">
            <path d="M6 1h9v8H6z" fill="#e8eef4" /><path d="M7.500 2.500h6v5h-6z" fill="#2f7ad8" />
            <path d="M1 6h9v8H1z" fill="#e8eef4" /><path d="M2.500 7.500h6v5h-6z" fill="#2f7ad8" />
        </svg>
        <svg viewBox="0 0 16 16" className="size-4" stroke="#16608c">
            <path d="M1 13V4h5l1-2h7v11z" fill="#2f9fd4" /><path d="M1 13l1-8h13l-1 8z" fill="#7fd4f4" />
        </svg>
        <svg viewBox="0 0 16 16" className="size-4">
            <path d="M3 1v14M5.5 1v14M8 1v14M10.5 1v14M13 1v14M1 3h14M1 5.5h14M1 8h14M1 10.5h14M1 13h14" stroke="#334" />
            <rect x="2.5" y="2.5" width="11" height="11" fill="#c5cce4" stroke="#556" />
            <path d="M5.5 5L8 11l2.5-6" stroke="#fff" strokeWidth="1.5" fill="none" />
        </svg>
        <span className="mx-px h-4 w-px bg-[#b8b4ac]" />
        <svg viewBox="0 0 16 16" className="size-4">
            <path d="M1 9c0-5 4-8 8-7 4 0 5 5 3 9-1 4-9 4-11-2z" fill="#b6bedc" stroke="#445" />
            <path d="M9 3l5 2-2 2c3 2 2 6-3 8l1-4-3-2 4-1z" fill="#3cb72c" stroke="#0d5a08" strokeWidth="0.8" />
        </svg>
        <svg viewBox="0 0 16 16" className="size-4">
            <rect x="0.7" y="0.7" width="14.6" height="14.6" fill="#f1f1e8" stroke="#5a5a48" strokeWidth="1.4" />
            <path d="M6 3h4v4h3l-5 6-5-6h3z" fill="#37c02a" stroke="#0a5a0a" />
        </svg>
        <span>F12</span>
    </div>
);

const BottomPanel = () => (
    <div className="flex h-6 items-center bg-linear-to-b from-[#5a5853] to-[#3f3e3a] text-[13px] text-[#dfdbd2]">
        <svg viewBox="0 0 22 18" className="ml-px h-[18px] w-[22px]">
            <rect width="22" height="18" fill="#7a3f78" />
            <rect x="1" y="4" width="20" height="13" fill="#bb5cba" />
            <path d="M0 0h22v3H0z" fill="#e7e2d4" />
            <path d="M3 6h2v2H3zM3 10h2v2H3z" fill="#fff" />
        </svg>
        <svg viewBox="0 0 4 10" className="mx-1 h-[10px] w-1" stroke="#222"><path d="M0 1.5h4M0 5.5h4M0 9.5h4" /></svg>
        <button className="flex h-[22px] w-[201px] items-center gap-2 rounded-[3px] bg-[#75695d] pl-[5px] whitespace-nowrap">
            <GuestIcon className="size-4" />
            winxp (Added DigiView...
        </button>
        <div className="ml-auto flex gap-px">
            <span className="grid h-[21px] w-[34px] place-items-center border border-[#f4efe8] bg-[#b5a898]"><FirefoxIcon className="size-4" /></span>
            <span className="grid h-[21px] w-[34px] place-items-center border border-[#f4efe8] bg-[#b5a898]">
                <svg viewBox="0 0 14 16" className="h-4 w-[14px]"><path d="M.5.5h13v15H.5z" fill="#f6f6f4" stroke="#ccc" /><path d="M4 8h5M3 11h8M8 5h3" stroke="#999" /></svg>
            </span>
            <span className="grid h-[21px] w-[34px] place-items-center border border-[#f4efe8] bg-[#b5a898]"><TerminalIcon className="h-[14px] w-4" /></span>
            <span className="grid h-[21px] w-[34px] place-items-center border border-[#f4efe8] bg-[#dfd8d0]"><GuestIcon className="size-4" /></span>
        </div>
        <svg viewBox="0 0 20 22" className="mr-px ml-[5px] h-[22px] w-5">
            <path d="M2 4l2 17h12l2-17z" fill="#8f918e" stroke="#c5c6c4" />
            <path d="M5 8l4 2 2-3 4 3M6 13l3 2 4-3 2 3M7 18l4-1 3 2" stroke="#b4b5b3" fill="none" strokeWidth="1.500" />
            <ellipse cx="10" cy="3.5" rx="9" ry="2.5" fill="#4a4a48" stroke="#cfd0ce" />
        </svg>
    </div>
);

export default function App() {
    return (
        <div className="flex min-h-screen flex-col bg-[#ece9d8] [font-family:'DejaVu_Sans',sans-serif]">
            <GnomePanel />
            <HostTitle />
            <div className="flex flex-1 flex-col text-black [font-family:'Liberation_Sans',sans-serif]">
                <AppTitle />
                <nav className="flex h-[19px] items-center gap-[11px] pl-[5px] text-[11px] text-[#aca899]">
                    <span>File</span>
                    <span>Config</span>
                    <span>Search</span>
                    <span>Window</span>
                    <span>Help</span>
                </nav>
                <AppToolbar />
                <main className="relative flex flex-1 flex-col">
                    <Graph />
                    <SignalEditor />
                </main>
                <StatusBar />
                <Taskbar />
            </div>
            <HostStatus />
            <BottomPanel />
        </div>
    );
}
